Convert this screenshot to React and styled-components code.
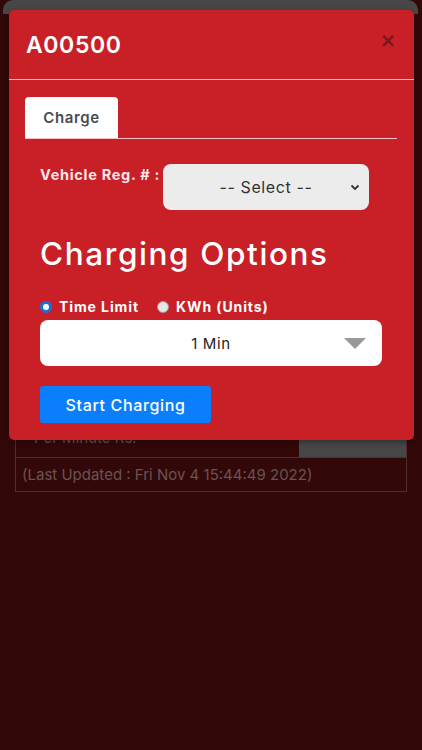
import React from "react";
import styled, { createGlobalStyle } from "styled-components";

const Global = createGlobalStyle`
  html, body { margin: 0; padding: 0; background: #330809; }
  body { font-family: "Inter", "Noto Sans", sans-serif; }
  * { box-sizing: border-box; }
`;

const Page = styled.div`
  position: relative;
  width: 422px;
  height: 750px;
  background: #330809;
  overflow: hidden;
`;

const BgCard = styled.div`
  margin: 0 4px 0 3px;
  display: flex;
  flex-direction: column;
`;

const BgHeader = styled.div`
  height: 14px;
  background: #474747;
  border-radius: 10px 10px 0 0;
`;

const BgTable = styled.div`
  margin: 0 11px 0 12px;
  display: flex;
  flex-direction: column;
  border: 1px solid #4f3031;
  border-top: none;
`;

const BgRow = styled.div`
  display: flex;
  height: ${(p) => p.$h}px;
  border-top: 1px solid #4f3031;
`;

const BgCell = styled.div`
  flex: ${(p) => (p.$grow ? 1 : "0 0 107px")};
  background: ${(p) => (p.$gray ? "#474747" : "transparent")};
  color: #6a5354;
  font-size: 15px;
  padding: ${(p) => p.$pad || "0"};
  display: flex;
  align-items: ${(p) => p.$align || "center"};
  white-space: nowrap;
`;

const Modal = styled.div`
  position: absolute;
  top: 10px;
  left: 9px;
  width: 405px;
  background: #c91f27;
  border-radius: 5px;
  color: #fff;
  box-shadow: 0 2px 6px rgba(0, 0, 0, 0.35);
`;

const ModalHeader = styled.div`
  height: 70px;
  display: flex;
  align-items: center;
  justify-content: space-between;
  padding: 0 18px 0 17px;
  border-bottom: 1px solid rgba(255, 225, 225, 0.8);
`;

const Title = styled.h4`
  margin: 0;
  font-size: 23px;
  font-weight: 600;
  letter-spacing: 0.6px;
`;

const Close = styled.button`
  border: none;
  background: none;
  padding: 0;
  margin-top: -8px;
  color: #6f1a1d;
  font-size: 19px;
  font-weight: 700;
  line-height: 1;
  font-family: "DejaVu Sans", sans-serif;
`;

const Body = styled.div`
  padding: 17px 17px 17px 16px;
`;

const TabNav = styled.div`
  display: flex;
  border-bottom: 1px solid rgba(255, 225, 225, 0.85);
`;

const Tab = styled.div`
  width: 93px;
  height: 41px;
  background: #fff;
  border-radius: 4px 4px 0 0;
  color: #454d55;
  font-size: 15px;
  font-weight: 600;
  letter-spacing: 0.6px;
  display: flex;
  align-items: center;
  justify-content: center;
`;

const TabPane = styled.div`
  padding: 25px 15px 0 15px;
  display: flex;
  flex-direction: column;
`;

const RegRow = styled.div`
  display: flex;
  align-items: flex-start;
  gap: 3px;
`;

const RegLabel = styled.label`
  font-size: 14.5px;
  font-weight: 700;
  letter-spacing: 0.7px;
  color: #fde8e9;
  padding-top: 2px;
  white-space: nowrap;
`;

const SelectBox = styled.div`
  width: 206px;
  height: 46px;
  background: #ececec;
  border-radius: 8px;
  display: flex;
  align-items: center;
  justify-content: center;
  position: relative;
  color: #333;
  font-size: 16px;
  letter-spacing: 0.6px;
`;

const Chevron = styled.svg`
  position: absolute;
  right: 9px;
  top: 20px;
`;

const Heading = styled.h2`
  margin: 24px 0 0 0;
  font-size: 31.5px;
  font-weight: 500;
  letter-spacing: 1.6px;
  line-height: 40px;
`;

const RadioRow = styled.div`
  margin-top: 24px;
  display: flex;
  align-items: center;
  gap: 18px;
  font-size: 14px;
  font-weight: 700;
  letter-spacing: 0.9px;
`;

const RadioItem = styled.span`
  display: flex;
  align-items: center;
  gap: 7px;
`;

const RadioDot = styled.span`
  width: 12px;
  height: 12px;
  border-radius: 50%;
  background: ${(p) => (p.$on ? "#fff" : "#e6e6e6")};
  border: ${(p) => (p.$on ? "3px solid #1a6fe0" : "1px solid #999")};
`;

const Dropdown = styled.div`
  margin-top: 5px;
  width: 342px;
  height: 46px;
  background: #fff;
  border-radius: 8px;
  display: flex;
  align-items: center;
  justify-content: center;
  position: relative;
  color: #222;
  font-size: 15px;
  letter-spacing: 0.6px;
`;

const Triangle = styled.svg`
  position: absolute;
  right: 16px;
  top: 18px;
`;

const StartButton = styled.button`
  margin-top: 20px;
  width: 171px;
  height: 37px;
  border: none;
  border-radius: 3px;
  background: #0b7ffb;
  color: #fff;
  font-size: 16px;
  font-family: inherit;
  font-weight: 500;
  letter-spacing: 0.65px;
`;

export default function App() {
  return (
    <Page>
      <Global />
      <BgCard>
        <BgHeader />
        <BgTable>
          <BgRow $h={443}>
            <BgCell $grow $pad="0 0 10px 18px" $align="flex-end">Per Minute Rs.</BgCell>
            <BgCell $gray />
          </BgRow>
          <BgRow $h={34}>
            <BgCell $grow $pad="0 0 0 6px">(Last Updated : Fri Nov 4 15:44:49 2022)</BgCell>
          </BgRow>
        </BgTable>
      </BgCard>
      <Modal>
        <ModalHeader>
          <Title>A00500</Title>
          <Close aria-label="close">×</Close>
        </ModalHeader>
        <Body>
          <TabNav>
            <Tab>Charge</Tab>
          </TabNav>
          <TabPane>
            <RegRow>
              <RegLabel>Vehicle Reg. # :</RegLabel>
              <SelectBox>
                -- Select --
                <Chevron width="10" height="7" viewBox="0 0 10 7">
                  <path d="M1.5 1.5 L5 5 L8.5 1.5" fill="none" stroke="#333" strokeWidth="1.8" />
                </Chevron>
              </SelectBox>
            </RegRow>
            <Heading>Charging Options</Heading>
            <RadioRow>
              <RadioItem>
                <RadioDot $on />
                Time Limit
              </RadioItem>
              <RadioItem>
                <RadioDot />
                KWh (Units)
              </RadioItem>
            </RadioRow>
            <Dropdown>
              1 Min
              <Triangle width="22" height="11" viewBox="0 0 22 11">
                <path d="M0 0 L22 0 L11 11 Z" fill="#999" />
              </Triangle>
            </Dropdown>
            <div>
              <StartButton>Start Charging</StartButton>
            </div>
          </TabPane>
        </Body>
      </Modal>
    </Page>
  );
}
